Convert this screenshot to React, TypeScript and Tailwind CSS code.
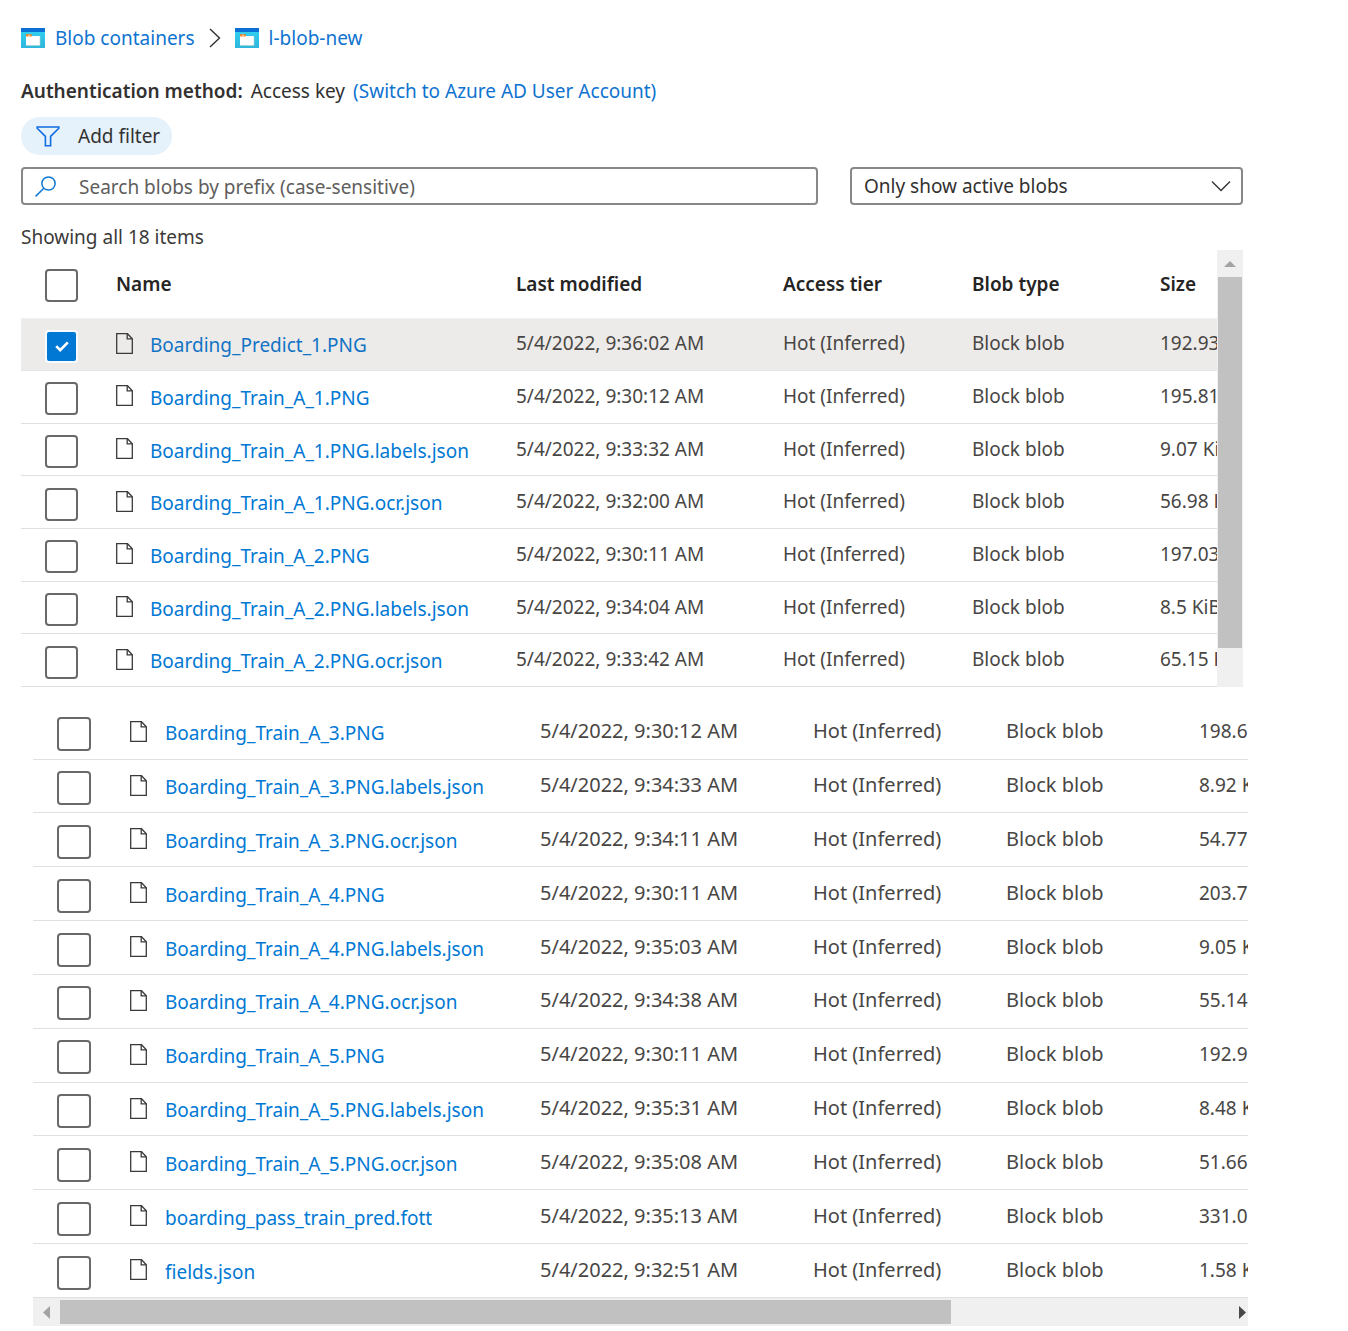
import React, { useState } from "react";

type Blob = { name: string; modified: string; size: string };

const firstBlobs: Blob[] = [
  { name: "Boarding_Predict_1.PNG", modified: "5/4/2022, 9:36:02 AM", size: "192.93 KiB" },
  { name: "Boarding_Train_A_1.PNG", modified: "5/4/2022, 9:30:12 AM", size: "195.81 KiB" },
  { name: "Boarding_Train_A_1.PNG.labels.json", modified: "5/4/2022, 9:33:32 AM", size: "9.07 KiB" },
  { name: "Boarding_Train_A_1.PNG.ocr.json", modified: "5/4/2022, 9:32:00 AM", size: "56.98 KiB" },
  { name: "Boarding_Train_A_2.PNG", modified: "5/4/2022, 9:30:11 AM", size: "197.03 KiB" },
  { name: "Boarding_Train_A_2.PNG.labels.json", modified: "5/4/2022, 9:34:04 AM", size: "8.5 KiB" },
  { name: "Boarding_Train_A_2.PNG.ocr.json", modified: "5/4/2022, 9:33:42 AM", size: "65.15 KiB" },
];

const moreBlobs: Blob[] = [
  { name: "Boarding_Train_A_3.PNG", modified: "5/4/2022, 9:30:12 AM", size: "198.6 KiB" },
  { name: "Boarding_Train_A_3.PNG.labels.json", modified: "5/4/2022, 9:34:33 AM", size: "8.92 KiB" },
  { name: "Boarding_Train_A_3.PNG.ocr.json", modified: "5/4/2022, 9:34:11 AM", size: "54.77 KiB" },
  { name: "Boarding_Train_A_4.PNG", modified: "5/4/2022, 9:30:11 AM", size: "203.7 KiB" },
  { name: "Boarding_Train_A_4.PNG.labels.json", modified: "5/4/2022, 9:35:03 AM", size: "9.05 KiB" },
  { name: "Boarding_Train_A_4.PNG.ocr.json", modified: "5/4/2022, 9:34:38 AM", size: "55.14 KiB" },
  { name: "Boarding_Train_A_5.PNG", modified: "5/4/2022, 9:30:11 AM", size: "192.9 KiB" },
  { name: "Boarding_Train_A_5.PNG.labels.json", modified: "5/4/2022, 9:35:31 AM", size: "8.48 KiB" },
  { name: "Boarding_Train_A_5.PNG.ocr.json", modified: "5/4/2022, 9:35:08 AM", size: "51.66 KiB" },
  { name: "boarding_pass_train_pred.fott", modified: "5/4/2022, 9:35:13 AM", size: "331.0 B" },
  { name: "fields.json", modified: "5/4/2022, 9:32:51 AM", size: "1.58 KiB" },
];

function ContainerIcon() {
  return (
    <svg width="24" height="20" viewBox="0 0 24 20" className="shrink-0" aria-hidden="true">
      <defs>
        <linearGradient id="container-body" x1="0" y1="0" x2="0" y2="1">
          <stop offset="0" stopColor="#32d4f5" />
          <stop offset="1" stopColor="#2fb5dc" />
        </linearGradient>
      </defs>
      <rect width="24" height="20" fill="url(#container-body)" />
      <rect width="24" height="4" fill="#0a70d6" />
      <path d="M5 8h14v9.5H5z" fill="#fff" />
      <path d="M5 17.5h14V8" fill="none" stroke="#a9d3c9" strokeWidth="0.6" />
      <path d="M5 6.2h5.8v2.2H5z" fill="#f58220" />
      <path d="M7 7.3h2" stroke="#fff" strokeWidth="0.6" />
    </svg>
  );
}

function FileIcon() {
  return (
    <svg width="17" height="21" viewBox="0 0 17 21" className="shrink-0" fill="none" stroke="#3b3a39" strokeWidth="1.3" aria-hidden="true">
      <path d="M.7.7h10.8l4.8 5v14.6H.7z" />
      <path d="M11.2.7v5.1h5.1" />
    </svg>
  );
}

function Checkbox({ label, initial = false, large = false }: { label: string; initial?: boolean; large?: boolean }) {
  const [checked, setChecked] = useState(initial);
  return (
    <label className={large ? "grid size-[34px] place-items-center" : "grid size-[33px] place-items-center"}>
      <input
        type="checkbox"
        aria-label={label}
        checked={checked}
        onChange={(e) => setChecked(e.target.checked)}
        className="col-start-1 row-start-1 size-full appearance-none rounded-[4px] border-2 border-[#6b6967] bg-white checked:border-[#f7fbff] checked:bg-[#0078d4]"
      />
      {checked && (
        <svg width="14" height="11" viewBox="0 0 14 11" className="pointer-events-none col-start-1 row-start-1" fill="none" stroke="#fff" strokeWidth="2.6" aria-hidden="true">
          <path d="M1.2 5.2l4 4L12.8 1.4" />
        </svg>
      )}
    </label>
  );
}

function BlobRow({ blob, selected = false, large = false }: { blob: Blob; selected?: boolean; large?: boolean }) {
  const cell = large ? "pb-[2px] text-[20px]" : "pb-[2px]";
  return (
    <tr className={selected ? "border-b border-[#e6e4e2] bg-[#edebe9]" : "border-b border-[#e1e0de]"}>
      <td className="pt-1 pl-6">
        <Checkbox label={`Select ${blob.name}`} initial={selected} large={large} />
      </td>
      <td className="pb-[2px]">
        <div className={large ? "flex items-center gap-[18px]" : "flex items-center gap-[17px]"}>
          <FileIcon />
          <a href="#" className={selected ? "pt-1 text-[#1173c5]" : "pt-1 text-[#0078d4]"}>
            {blob.name}
          </a>
        </div>
      </td>
      <td className={cell}>{blob.modified}</td>
      <td className={cell}>Hot (Inferred)</td>
      <td className={cell}>Block blob</td>
      <td className="overflow-hidden pb-[2px]">{blob.size}</td>
    </tr>
  );
}

export default function App() {
  return (
    <main className="bg-white font-['Noto_Sans','Open_Sans',sans-serif] text-[19px] leading-7 text-[#323130]">
      <section className="pt-6 pr-[105px] pl-[21px]">
        <nav aria-label="Breadcrumb" className="flex items-center gap-[10px] text-[#0f73d0]">
          <ContainerIcon />
          <a href="#">Blob containers</a>
          <svg width="12" height="20" viewBox="0 0 12 20" className="mx-1" fill="none" stroke="#323130" strokeWidth="1.4" aria-hidden="true">
            <path d="M1 1l9.5 9L1 19" />
          </svg>
          <ContainerIcon />
          <a href="#">l-blob-new</a>
        </nav>

        <p className="mt-[25px] flex">
          <span className="font-semibold">Authentication method:</span>
          <span className="ml-2">Access key</span>
          <a href="#" className="ml-2 text-[#0f73d0]">(Switch to Azure AD User Account)</a>
        </p>

        <button type="button" className="mt-3 flex h-[38px] items-center gap-[18px] rounded-full bg-[#e5f1fb] pr-3 pl-[15px]">
          <svg width="24" height="21" viewBox="0 0 24 21" fill="none" stroke="#0f6cdf" strokeWidth="1.6" aria-hidden="true">
            <path d="M1.2 1h21.6v1.2l-8.2 8.2v9.4H9.4v-9.4L1.2 2.2z" />
          </svg>
          Add filter
        </button>

        <div className="mt-3 flex gap-8">
          <label className="flex h-[38px] flex-1 items-center gap-[23px] rounded-[4px] border-2 border-[#8a8886] pl-3">
            <svg width="21" height="21" viewBox="0 0 21 21" className="shrink-0" fill="none" stroke="#0f78d4" strokeWidth="1.5" aria-hidden="true">
              <circle cx="13.5" cy="7.5" r="6.6" />
              <path d="M8.8 12.2L.6 20.4" />
            </svg>
            <input
              type="text"
              aria-label="Search blobs by prefix"
              placeholder="Search blobs by prefix (case-sensitive)"
              className="h-full min-w-0 flex-1 pt-[2px] outline-none placeholder:text-[#605e5c]"
            />
          </label>
          <div className="grid w-[393px]">
            <select aria-label="Blob state" className="col-start-1 row-start-1 h-[38px] appearance-none rounded-[4px] border-2 border-[#8a8886] bg-white pr-10 pl-3">
              <option>Only show active blobs</option>
            </select>
            <svg width="20" height="12" viewBox="0 0 20 12" className="pointer-events-none col-start-1 row-start-1 mr-3 self-center justify-self-end" fill="none" stroke="#323130" strokeWidth="1.3" aria-hidden="true">
              <path d="M1 1.5l9 9 9-9" />
            </svg>
          </div>
        </div>

        <p className="mt-[18px] -mb-px text-[#3b3a39]">Showing all 18 items</p>

        <div className="flex">
          <div className="min-w-0 flex-1 overflow-hidden">
            <table className="h-[437px] w-full table-fixed border-collapse text-left whitespace-nowrap text-[#484644]">
              <colgroup>
                <col className="w-[95px]" />
                <col className="w-[400px]" />
                <col className="w-[267px]" />
                <col className="w-[189px]" />
                <col className="w-[188px]" />
                <col />
              </colgroup>
              <thead>
                <tr className="h-[68px] border-b border-[#f3f2f1] text-[#252423]">
                  <th className="pt-1 pl-6">
                    <Checkbox label="Select all" />
                  </th>
                  <th className="font-semibold">Name</th>
                  <th className="font-semibold">Last modified</th>
                  <th className="font-semibold">Access tier</th>
                  <th className="font-semibold">Blob type</th>
                  <th className="font-semibold">Size</th>
                </tr>
              </thead>
              <tbody>
                {firstBlobs.map((blob, i) => (
                  <BlobRow key={blob.name} blob={blob} selected={i === 0} />
                ))}
              </tbody>
            </table>
          </div>
          <div className="flex w-[26px] flex-col items-center bg-[#f0f0f0]" aria-hidden="true">
            <svg width="12" height="6" viewBox="0 0 12 6" className="mt-[11px] mb-[10px] shrink-0" fill="#a3a3a3">
              <path d="M6 0l6 6H0z" />
            </svg>
            <div className="h-[371px] w-6 bg-[#c1c1c1]" />
          </div>
        </div>
      </section>

      <section className="pt-[19px] pr-[100px] pb-1 pl-[33px]">
        <div className="overflow-hidden">
          <table className="h-[592px] w-full table-fixed border-collapse text-left text-[19px] whitespace-nowrap text-[#484644]">
            <colgroup>
              <col className="w-[97px]" />
              <col className="w-[410px]" />
              <col className="w-[273px]" />
              <col className="w-[193px]" />
              <col className="w-[193px]" />
              <col />
            </colgroup>
            <tbody>
              {moreBlobs.map((blob) => (
                <BlobRow key={blob.name} blob={blob} large />
              ))}
            </tbody>
          </table>
        </div>
        <div className="flex h-7 items-center bg-[#f0f0f0]" aria-hidden="true">
          <svg width="7" height="13" viewBox="0 0 7 13" className="mx-[10px] shrink-0" fill="#a3a3a3">
            <path d="M7 0v13L0 6.5z" />
          </svg>
          <div className="flex-1">
            <div className="mr-[288px] h-6 bg-[#c1c1c1]" />
          </div>
          <svg width="7" height="13" viewBox="0 0 7 13" className="mr-[2px] shrink-0" fill="#484848">
            <path d="M0 0v13l7-6.5z" />
          </svg>
        </div>
      </section>
    </main>
  );
}
